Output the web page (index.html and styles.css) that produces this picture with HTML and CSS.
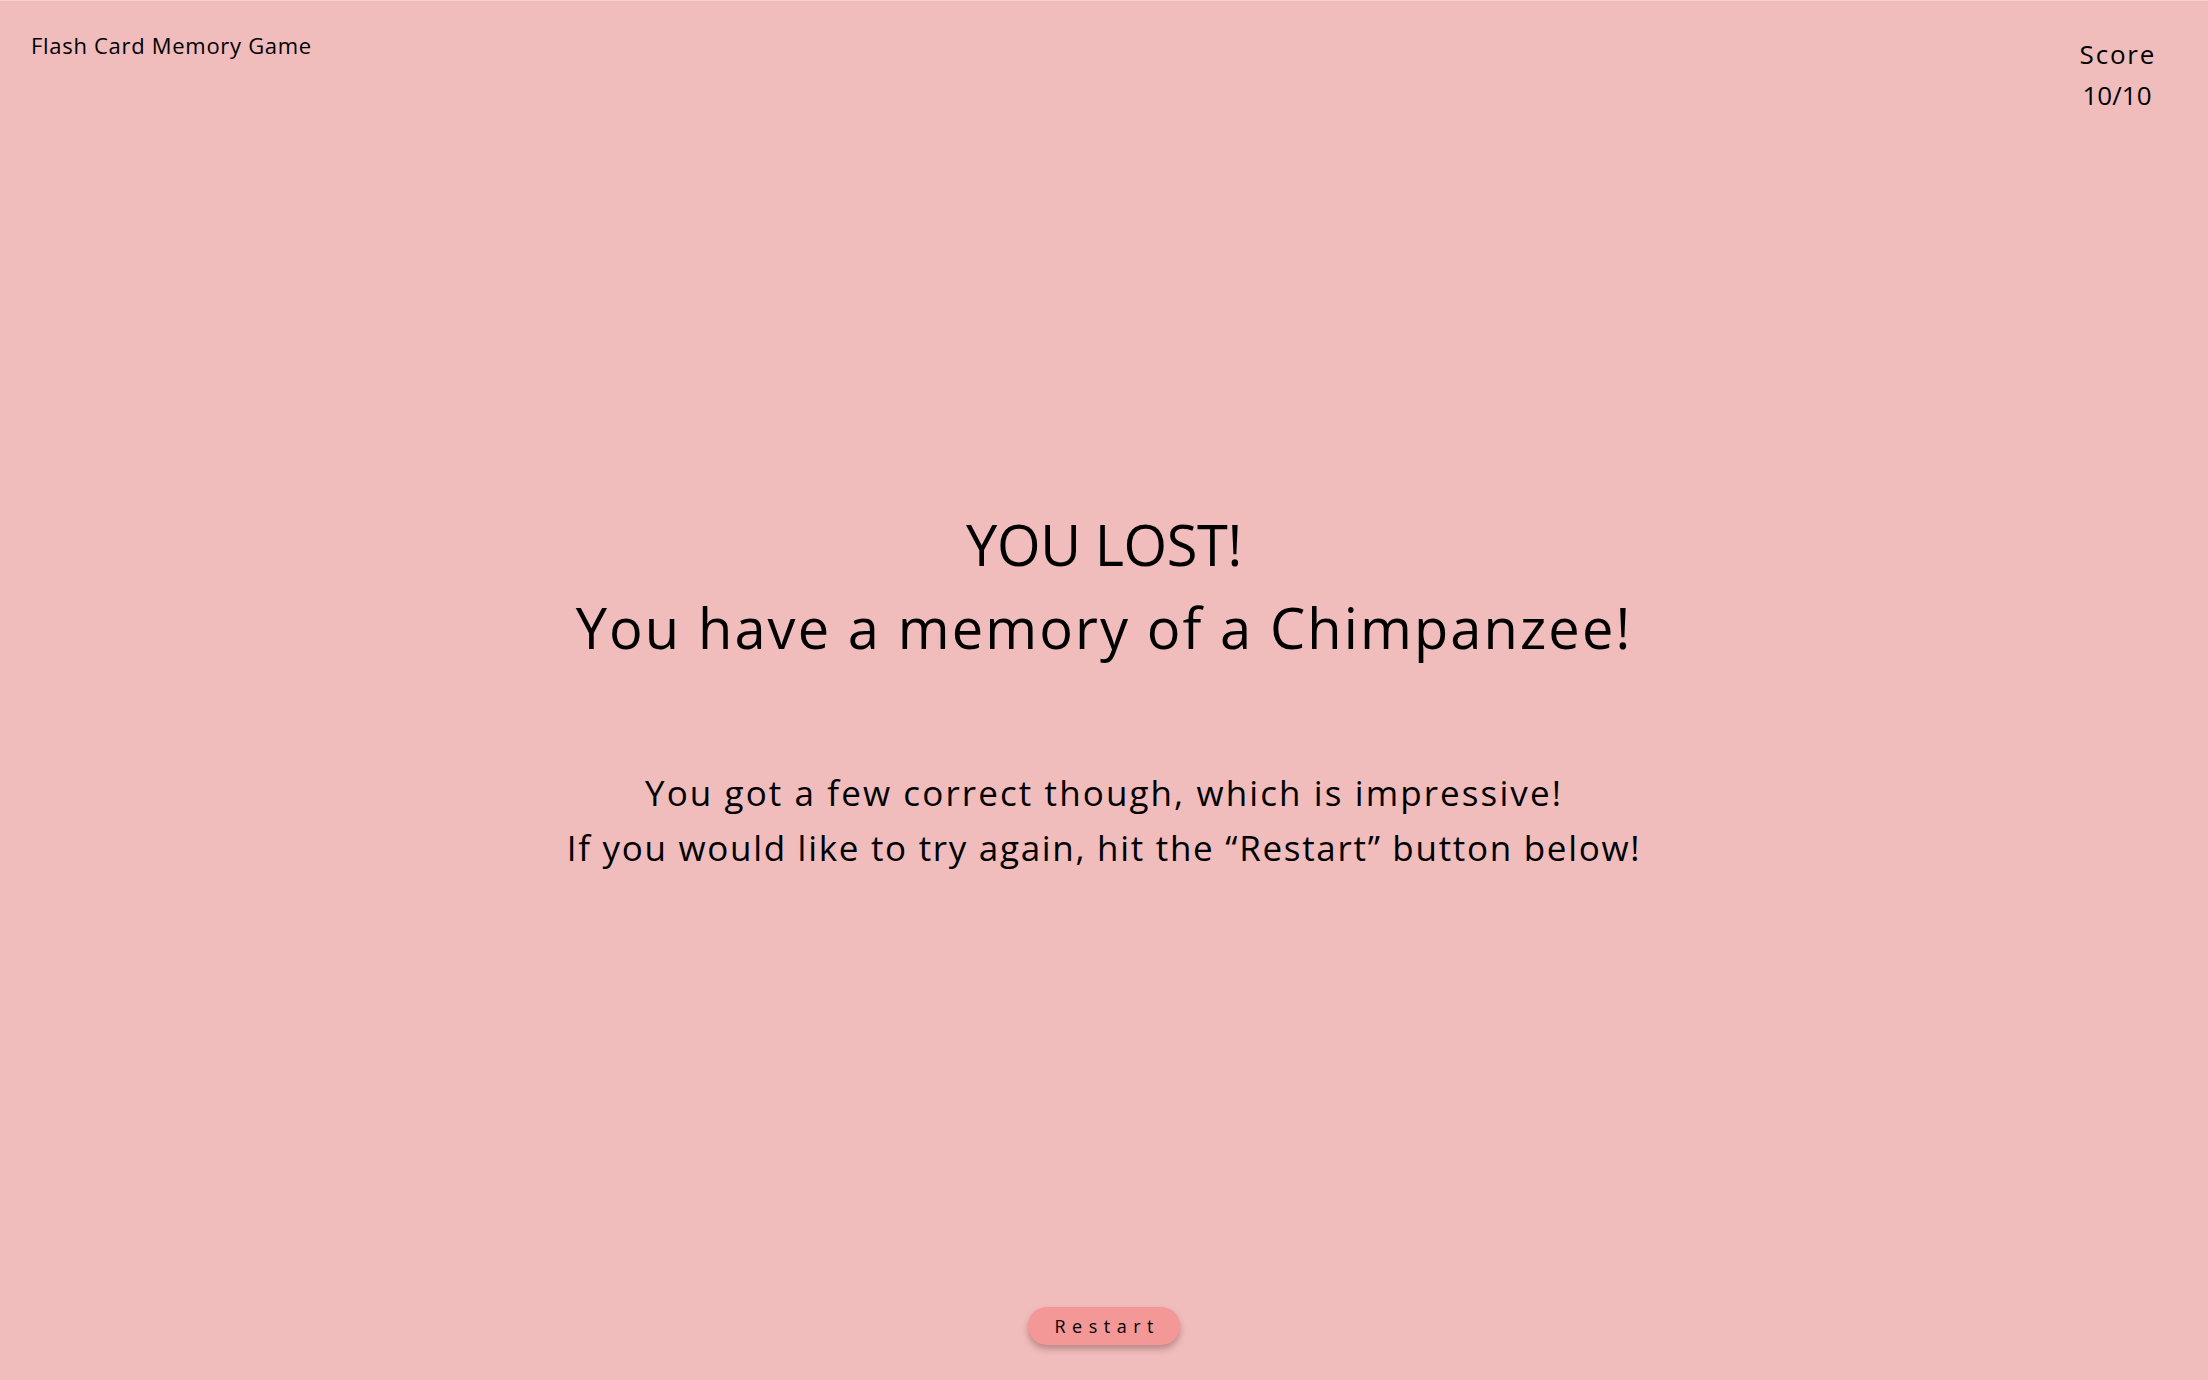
FILE: index.html
```html
<!DOCTYPE html>
<html lang="en">
<head>
<meta charset="utf-8">
<title>Flash Card Memory Game</title>
<link rel="stylesheet" href="styles.css">
</head>
<body>
<div class="page">
  <header class="topbar">
    <div class="brand">Flash Card Memory Game</div>
    <div class="score">
      <div class="score-label">Score</div>
      <div class="score-value">10/10</div>
    </div>
  </header>
  <main class="result">
    <h1 class="result-title">
      <span class="line line-caps">YOU LOST!</span>
      <span class="line">You have a memory of a Chimpanzee!</span>
    </h1>
    <p class="result-text">
      <span class="line line-first">You got a few correct though, which is impressive!</span>
      <span class="line line-second">If you would like to try again, hit the “Restart” button below!</span>
    </p>
  </main>
  <footer class="actions">
    <button class="restart" type="button">Restart</button>
  </footer>
</div>
</body>
</html>
```

FILE: styles.css
```css
html, body {
  margin: 0;
  padding: 0;
}

body {
  background: #f0bcbc;
  color: #000;
  font-family: "Open Sans", "Noto Sans", sans-serif;
}

.page {
  height: 100vh;
  box-sizing: border-box;
  border-top: 1px solid #f4cfcf;
  display: grid;
  grid-template-rows: 1fr auto 1fr;
}

.topbar {
  align-self: start;
  display: flex;
  justify-content: space-between;
  align-items: flex-start;
  padding: 29px 41px 0 31px;
}

.brand {
  font-size: 22px;
  line-height: 30px;
  letter-spacing: 0.7px;
}

.score {
  width: 100px;
  margin-top: 4px;
  text-align: center;
  font-size: 26px;
  line-height: 41px;
}

.score-label {
  letter-spacing: 1.8px;
  padding-left: 1.8px;
}

.result {
  text-align: center;
}

.result-title {
  margin: -3px 0 0;
  font-weight: 400;
  font-size: 56px;
  line-height: 83px;
  letter-spacing: 2.1px;
}

.line {
  display: block;
}

.line-caps {
  letter-spacing: -0.4px;
}

.result-text {
  margin: 96px 0 0;
  font-size: 35px;
  line-height: 55px;
  letter-spacing: 1.8px;
}

.line-first {
  letter-spacing: 2.1px;
}

.line-second {
  letter-spacing: 1.7px;
}

.actions {
  align-self: end;
  display: flex;
  justify-content: center;
  padding-bottom: 35px;
}

.restart {
  width: 152px;
  height: 38px;
  border: none;
  border-radius: 19px;
  background: #f49797;
  box-shadow: 0 4px 6px rgba(90, 40, 40, 0.35);
  font-family: "Open Sans", "Noto Sans", sans-serif;
  font-size: 18px;
  letter-spacing: 6.5px;
  padding: 0 0 0 6.5px;
  color: #000;
  cursor: pointer;
}
```
